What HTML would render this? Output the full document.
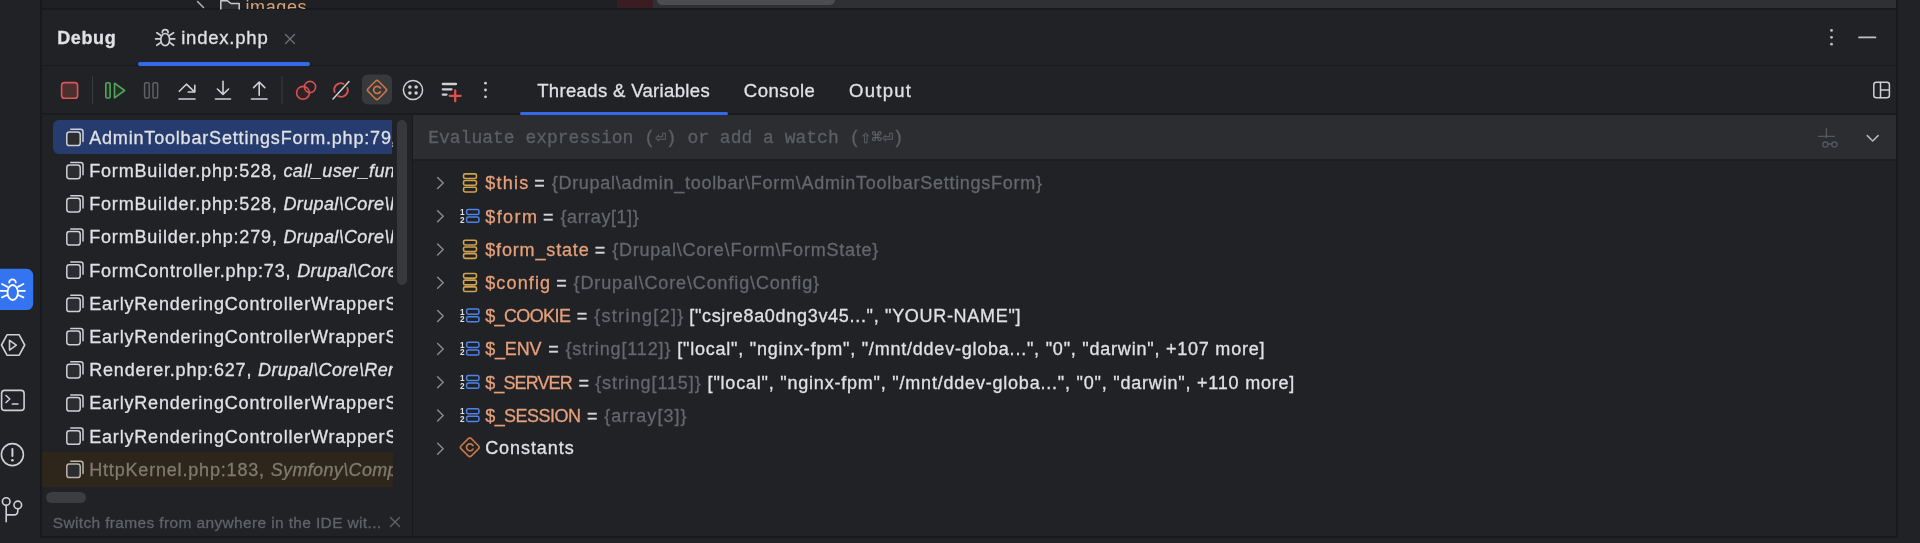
<!DOCTYPE html>
<html><head><meta charset="utf-8">
<style>
html,body{margin:0;padding:0;width:1920px;height:543px;overflow:hidden;background:#212225;}
body{position:relative;font-family:"Liberation Sans",sans-serif;}
.b{position:absolute;}
.t{position:absolute;white-space:pre;line-height:20px;-webkit-text-stroke:0.3px currentColor;}
.frames{position:absolute;left:42px;top:115px;width:351px;height:380px;overflow:hidden;}
.fr{position:absolute;left:47.2px;width:304px;white-space:pre;font-size:18px;line-height:20px;letter-spacing:0.82px;overflow:hidden;}
.fr{-webkit-text-stroke:0.3px currentColor;}
.fr i{font-style:italic;letter-spacing:0.35px;}
svg{position:absolute;left:0;top:0;}
</style></head>
<body>
<div id="wrap" style="position:absolute;left:0;top:0;width:1920px;height:543px;overflow:hidden;filter:blur(0.4px)">
<!-- top remnant -->
<div class="b" style="left:42px;top:0;width:575px;height:9px;background:#1f2023"></div>
<div class="b" style="left:617px;top:0;width:36px;height:9px;background:#391d23"></div>
<div class="b" style="left:653px;top:0;width:1243px;height:9px;background:#2e3034"></div>
<div class="b" style="left:657px;top:-6px;width:178px;height:10.5px;background:#4b4d51;border-radius:5px"></div>
<div class="b" style="left:42px;top:8px;width:1856px;height:2px;background:#18191b"></div>
<div class="b" style="left:245.5px;top:-3.5px;font-size:18px;line-height:20px;color:#d8a173;white-space:pre;letter-spacing:0.6px">images</div>
<div class="b" style="left:42px;top:9px;width:1856px;height:1px;background:#1a1b1e"></div>

<!-- panel -->
<div class="b" style="left:42px;top:10px;width:1854px;height:526px;background:#212225"></div>
<!-- left border -->
<div class="b" style="left:40px;top:0;width:2px;height:538px;background:#18191b"></div>
<!-- right border -->
<div class="b" style="left:1896px;top:0;width:2px;height:538px;background:#18191b"></div>
<!-- bottom border -->
<div class="b" style="left:40px;top:536px;width:1858px;height:2px;background:#18191b"></div>
<!-- header border -->
<div class="b" style="left:42px;top:65px;width:1854px;height:1.2px;background:#1a1b1d"></div>
<!-- blue underline header -->
<div class="b" style="left:137.5px;top:62.3px;width:172.5px;height:3.5px;background:#3469e9;border-radius:2px"></div>
<!-- toolbar border -->
<div class="b" style="left:42px;top:113px;width:1854px;height:2px;background:#1a1b1d"></div>
<div class="b" style="left:520px;top:112px;width:208px;height:3px;background:#3469e9;border-radius:1.5px"></div>
<!-- divider -->
<div class="b" style="left:411.7px;top:115px;width:1.8px;height:421px;background:#18191c"></div>
<!-- evaluate bar -->
<div class="b" style="left:413px;top:115px;width:1483px;height:44px;background:#2b2d30"></div>
<div class="b" style="left:413px;top:159px;width:1483px;height:2px;background:#1c1d20"></div>

<!-- selected frame -->
<div class="b" style="left:53px;top:120px;width:339.3px;height:33.5px;background:#263c6e;border-radius:6px 0 0 6px"></div>
<!-- library frame -->
<div class="b" style="left:42px;top:452px;width:351px;height:35px;background:#2e261b"></div>
<!-- scrollbars -->
<div class="b" style="left:397px;top:120px;width:10px;height:165px;background:#36383c;border-radius:5px"></div>
<div class="b" style="left:46px;top:491.5px;width:40px;height:11px;background:#3b3d41;border-radius:6px"></div>

<div class="frames">
<div class="fr" style="top:12.7px;color:#dfe1e5">AdminToolbarSettingsForm.php:79<i>, </i></div>
<div class="fr" style="top:45.9px;color:#dfe1e5">FormBuilder.php:528, <i>call_user_func_array:...</i></div>
<div class="fr" style="top:79.1px;color:#dfe1e5">FormBuilder.php:528, <i>Drupal\Core\Form\FormBuilder</i></div>
<div class="fr" style="top:112.3px;color:#dfe1e5">FormBuilder.php:279, <i>Drupal\Core\Form\FormBuilder</i></div>
<div class="fr" style="top:145.5px;color:#dfe1e5">FormController.php:73, <i>Drupal\Core\Controller</i></div>
<div class="fr" style="top:178.7px;color:#dfe1e5">EarlyRenderingControllerWrapperSubscriber.php<i></i></div>
<div class="fr" style="top:211.9px;color:#dfe1e5">EarlyRenderingControllerWrapperSubscriber.php<i></i></div>
<div class="fr" style="top:245.1px;color:#dfe1e5">Renderer.php:627, <i>Drupal\Core\Render\Renderer</i></div>
<div class="fr" style="top:278.3px;color:#dfe1e5">EarlyRenderingControllerWrapperSubscriber.php<i></i></div>
<div class="fr" style="top:311.5px;color:#dfe1e5">EarlyRenderingControllerWrapperSubscriber.php<i></i></div>
<div class="fr" style="top:344.7px;color:#807a70">HttpKernel.php:183, <i>Symfony\Component\HttpKernel</i></div>
</div>

<div class="t" style="left:57.2px;top:28.2px;font-size:18px;font-family:'Liberation Sans', sans-serif;color:#dfe1e5;letter-spacing:0.626px;font-weight:bold">Debug</div>
<div class="t" style="left:181.2px;top:28.0px;font-size:18.5px;font-family:'Liberation Sans', sans-serif;color:#dfe1e5;letter-spacing:0.783px;">index.php</div>
<div class="t" style="left:537.2px;top:80.6px;font-size:18.5px;font-family:'Liberation Sans', sans-serif;color:#dfe1e5;letter-spacing:0.348px;">Threads &amp; Variables</div>
<div class="t" style="left:743.8px;top:81.0px;font-size:18.5px;font-family:'Liberation Sans', sans-serif;color:#dfe1e5;letter-spacing:0.537px;">Console</div>
<div class="t" style="left:849.0px;top:81.0px;font-size:18.5px;font-family:'Liberation Sans', sans-serif;color:#dfe1e5;letter-spacing:1.273px;">Output</div>
<div class="t" style="left:428.2px;top:128.2px;font-size:18px;font-family:'Liberation Mono', monospace;color:#5c5f64;letter-spacing:0.000px;">Evaluate expression (⏎) or add a watch (⇧⌘⏎)</div>
<div class="t" style="left:485.2px;top:173.3px;font-size:18px;font-family:'Liberation Sans', sans-serif;color:#e5a07b;letter-spacing:1.245px;">$this</div>
<div class="t" style="left:534.2px;top:173.3px;font-size:18px;font-family:'Liberation Sans', sans-serif;color:#d2d4d8;letter-spacing:0.000px;">=</div>
<div class="t" style="left:551.7px;top:173.3px;font-size:18px;font-family:'Liberation Sans', sans-serif;color:#64676c;letter-spacing:0.727px;">{Drupal\admin_toolbar\Form\AdminToolbarSettingsForm}</div>
<div class="t" style="left:485.2px;top:206.5px;font-size:18px;font-family:'Liberation Sans', sans-serif;color:#e5a07b;letter-spacing:1.447px;">$form</div>
<div class="t" style="left:542.9px;top:206.5px;font-size:18px;font-family:'Liberation Sans', sans-serif;color:#d2d4d8;letter-spacing:0.000px;">=</div>
<div class="t" style="left:560.5px;top:206.5px;font-size:18px;font-family:'Liberation Sans', sans-serif;color:#64676c;letter-spacing:0.573px;">{array[1]}</div>
<div class="t" style="left:485.2px;top:239.7px;font-size:18px;font-family:'Liberation Sans', sans-serif;color:#e5a07b;letter-spacing:0.846px;">$form_state</div>
<div class="t" style="left:594.8px;top:239.7px;font-size:18px;font-family:'Liberation Sans', sans-serif;color:#d2d4d8;letter-spacing:0.000px;">=</div>
<div class="t" style="left:612.2px;top:239.7px;font-size:18px;font-family:'Liberation Sans', sans-serif;color:#64676c;letter-spacing:0.782px;">{Drupal\Core\Form\FormState}</div>
<div class="t" style="left:485.2px;top:272.9px;font-size:18px;font-family:'Liberation Sans', sans-serif;color:#e5a07b;letter-spacing:1.143px;">$config</div>
<div class="t" style="left:556.2px;top:272.9px;font-size:18px;font-family:'Liberation Sans', sans-serif;color:#d2d4d8;letter-spacing:0.000px;">=</div>
<div class="t" style="left:573.6px;top:272.9px;font-size:18px;font-family:'Liberation Sans', sans-serif;color:#64676c;letter-spacing:0.860px;">{Drupal\Core\Config\Config}</div>
<div class="t" style="left:485.2px;top:306.1px;font-size:18px;font-family:'Liberation Sans', sans-serif;color:#e5a07b;letter-spacing:-0.619px;">$_COOKIE</div>
<div class="t" style="left:576.8px;top:306.1px;font-size:18px;font-family:'Liberation Sans', sans-serif;color:#d2d4d8;letter-spacing:0.000px;">=</div>
<div class="t" style="left:594.2px;top:306.1px;font-size:18px;font-family:'Liberation Sans', sans-serif;color:#64676c;letter-spacing:1.305px;">{string[2]}</div>
<div class="t" style="left:689.2px;top:306.1px;font-size:18px;font-family:'Liberation Sans', sans-serif;color:#dfe1e5;letter-spacing:0.695px;">[&quot;csjre8a0dng3v45...&quot;, &quot;YOUR-NAME&quot;]</div>
<div class="t" style="left:485.2px;top:339.3px;font-size:18px;font-family:'Liberation Sans', sans-serif;color:#e5a07b;letter-spacing:-0.183px;">$_ENV</div>
<div class="t" style="left:548.2px;top:339.3px;font-size:18px;font-family:'Liberation Sans', sans-serif;color:#d2d4d8;letter-spacing:0.000px;">=</div>
<div class="t" style="left:565.4px;top:339.3px;font-size:18px;font-family:'Liberation Sans', sans-serif;color:#64676c;letter-spacing:0.855px;">{string[112]}</div>
<div class="t" style="left:677.2px;top:339.3px;font-size:18px;font-family:'Liberation Sans', sans-serif;color:#dfe1e5;letter-spacing:0.778px;">[&quot;local&quot;, &quot;nginx-fpm&quot;, &quot;/mnt/ddev-globa...&quot;, &quot;0&quot;, &quot;darwin&quot;, +107 more]</div>
<div class="t" style="left:485.2px;top:372.5px;font-size:18px;font-family:'Liberation Sans', sans-serif;color:#e5a07b;letter-spacing:-0.888px;">$_SERVER</div>
<div class="t" style="left:578.6px;top:372.5px;font-size:18px;font-family:'Liberation Sans', sans-serif;color:#d2d4d8;letter-spacing:0.000px;">=</div>
<div class="t" style="left:595.2px;top:372.5px;font-size:18px;font-family:'Liberation Sans', sans-serif;color:#64676c;letter-spacing:0.897px;">{string[115]}</div>
<div class="t" style="left:707.6px;top:372.5px;font-size:18px;font-family:'Liberation Sans', sans-serif;color:#dfe1e5;letter-spacing:0.789px;">[&quot;local&quot;, &quot;nginx-fpm&quot;, &quot;/mnt/ddev-globa...&quot;, &quot;0&quot;, &quot;darwin&quot;, +110 more]</div>
<div class="t" style="left:485.2px;top:405.7px;font-size:18px;font-family:'Liberation Sans', sans-serif;color:#e5a07b;letter-spacing:-0.543px;">$_SESSION</div>
<div class="t" style="left:587.0px;top:405.7px;font-size:18px;font-family:'Liberation Sans', sans-serif;color:#d2d4d8;letter-spacing:0.000px;">=</div>
<div class="t" style="left:604.2px;top:405.7px;font-size:18px;font-family:'Liberation Sans', sans-serif;color:#64676c;letter-spacing:1.028px;">{array[3]}</div>
<div class="t" style="left:485.2px;top:438.1px;font-size:18px;font-family:'Liberation Sans', sans-serif;color:#dfe1e5;letter-spacing:0.932px;">Constants</div>
<div class="t" style="left:52.7px;top:513.0px;font-size:15.5px;font-family:'Liberation Sans', sans-serif;color:#606368;letter-spacing:0.359px;">Switch frames from anywhere in the IDE wit...</div>

<svg width="1920" height="543" viewBox="0 0 1920 543" fill="none" stroke-linecap="round" stroke-linejoin="round">
 <!-- top remnant icons -->
 <path d="M197.5 1.5 L203.5 7.5" stroke="#aeb1b6" stroke-width="1.5"/>
 <path d="M220.8 9 V0.8 H227.5 L231 3.5 H239.2 V9" stroke="#c9cbd0" stroke-width="1.5" fill="#2b2d30"/>

 <!-- header: bug icon -->
 <g stroke="#ced0d6" stroke-width="1.7">
  <path d="M162.3 32.6 A2.9 2.9 0 0 1 168.1 32.6"/>
  <ellipse cx="165.2" cy="39.6" rx="4.4" ry="6.1" fill="#212225"/>
  <path d="M156.8 32.8 L160.6 35.3 M155.6 38.8 H160.4 M156.8 45.3 L160.6 42.6 M173.6 32.8 L169.8 35.3 M174.8 38.8 H170 M173.6 45.3 L169.8 42.6"/>
 </g>
 <path d="M285.5 34.5 L294.5 43.5 M294.5 34.5 L285.5 43.5" stroke="#6f737a" stroke-width="1.3"/>

 <!-- top right -->
 <g fill="#bfc1c5"><circle cx="1831.5" cy="30.4" r="1.4"/><circle cx="1831.5" cy="37.3" r="1.4"/><circle cx="1831.5" cy="44.2" r="1.4"/></g>
 <path d="M1859 37.4 H1875.5" stroke="#bfc1c5" stroke-width="1.7"/>

 <!-- toolbar -->
 <rect x="61.6" y="82.6" width="16" height="15.6" rx="2.8" fill="#4e2f30" stroke="#dc5656" stroke-width="1.6"/>
 <path d="M92.5 76.5 V103.5" stroke="#393b40" stroke-width="1"/>
 <rect x="105.8" y="82.8" width="4.3" height="15.2" rx="1.3" stroke="#53a55c" stroke-width="1.6" fill="#233026"/>
 <path d="M114.5 83.2 L124.6 90.5 L114.5 97.8 Z" stroke="#53a55c" stroke-width="1.6" fill="#233026"/>
 <rect x="144.6" y="82.8" width="4.6" height="15.2" rx="1.3" stroke="#5e6166" stroke-width="1.5"/>
 <rect x="153" y="82.8" width="4.6" height="15.2" rx="1.3" stroke="#5e6166" stroke-width="1.5"/>
 <g stroke="#ced0d6" stroke-width="1.6">
  <path d="M179.3 91.2 L186.4 84.2 L194.3 91.6"/>
  <path d="M194.8 85.2 V92 H188.2"/>
  <path d="M179 99 H195"/>
  <path d="M223 81.2 V94 M217.4 89 L223 94.4 L228.6 89"/>
  <path d="M215.5 99 H230.5"/>
  <path d="M259.2 82.5 V95.2 M253.6 87.6 L259.2 82 L264.8 87.6"/>
  <path d="M251.5 99 H267"/>
 </g>
 <path d="M282 76.5 V103.5" stroke="#393b40" stroke-width="1"/>
 <circle cx="303" cy="92.8" r="6.4" stroke="#d95050" stroke-width="1.6" fill="#2e2224"/>
 <circle cx="310" cy="87" r="5.6" stroke="#d95050" stroke-width="1.6"/>
 <path d="M334.6 92 A6.6 6.6 0 0 1 343.5 83.8 M347.4 88 A6.6 6.6 0 0 1 338.5 96.2" stroke="#d95050" stroke-width="1.9"/>
 <path d="M333 99 L349 81.5" stroke="#ced0d6" stroke-width="1.5"/>
 <rect x="362" y="74.5" width="30" height="30" rx="6" fill="#38393d"/>
 <rect x="-7.3" y="-7.3" width="14.6" height="14.6" rx="2.2" transform="translate(377 90) rotate(45)" stroke="#cd7748" stroke-width="1.6" fill="#30262200"/>
 <path d="M380.3 88 A3.6 3.6 0 1 0 380.3 91.8" stroke="#cd7748" stroke-width="1.7"/>
 <circle cx="413" cy="90" r="9.6" stroke="#ced0d6" stroke-width="1.5"/>
 <g fill="#ced0d6"><circle cx="409.9" cy="86.9" r="1.75"/><circle cx="416.1" cy="86.9" r="1.75"/><circle cx="409.9" cy="93.1" r="1.75"/><circle cx="416.1" cy="93.1" r="1.75"/></g>
 <path d="M442.8 84 H456 M442.8 89.3 H451.5 M442.8 94.6 H446.5" stroke="#ced0d6" stroke-width="2.3"/>
 <path d="M455.2 90.3 V101.3 M449.7 95.8 H460.7" stroke="#e04f4f" stroke-width="2.3"/>
 <g fill="#ced0d6"><circle cx="485.5" cy="83.2" r="1.4"/><circle cx="485.5" cy="90" r="1.4"/><circle cx="485.5" cy="96.8" r="1.4"/></g>

 <!-- layout icon -->
 <rect x="1873.8" y="82.2" width="15.6" height="15.6" rx="2.5" stroke="#ced0d6" stroke-width="1.5"/>
 <path d="M1880.5 82.5 V97.5 M1880.5 90 H1889" stroke="#ced0d6" stroke-width="1.5"/>

 <!-- evaluate icons -->
 <path d="M1826.4 128.5 V137.5 M1818.5 136.3 H1834.5" stroke="#55585d" stroke-width="1.3"/>
 <circle cx="1825.4" cy="144.6" r="2.6" stroke="#55585d" stroke-width="1.3"/>
 <circle cx="1834.4" cy="144.6" r="2.6" stroke="#55585d" stroke-width="1.3"/>
 <path d="M1828 144 H1831.8" stroke="#55585d" stroke-width="1.3"/>
 <path d="M1867.3 135.6 L1872.7 141 L1878.1 135.6" stroke="#b8bbc0" stroke-width="1.5"/>

 <path d="M70.8 129.3 H80.6 A2.4 2.4 0 0 1 83 131.7 V141.5" stroke="#ced0d6" stroke-width="1.5"/>
<rect x="66.8" y="131.9" width="13.4" height="13.6" rx="2.6" stroke="#ced0d6" stroke-width="1.5" fill="#2b2d30"/>
<path d="M70.8 162.5 H80.6 A2.4 2.4 0 0 1 83 164.9 V174.7" stroke="#ced0d6" stroke-width="1.5"/>
<rect x="66.8" y="165.1" width="13.4" height="13.6" rx="2.6" stroke="#ced0d6" stroke-width="1.5" fill="#2b2d30"/>
<path d="M70.8 195.7 H80.6 A2.4 2.4 0 0 1 83 198.1 V207.9" stroke="#ced0d6" stroke-width="1.5"/>
<rect x="66.8" y="198.3" width="13.4" height="13.6" rx="2.6" stroke="#ced0d6" stroke-width="1.5" fill="#2b2d30"/>
<path d="M70.8 228.9 H80.6 A2.4 2.4 0 0 1 83 231.3 V241.1" stroke="#ced0d6" stroke-width="1.5"/>
<rect x="66.8" y="231.5" width="13.4" height="13.6" rx="2.6" stroke="#ced0d6" stroke-width="1.5" fill="#2b2d30"/>
<path d="M70.8 262.1 H80.6 A2.4 2.4 0 0 1 83 264.5 V274.3" stroke="#ced0d6" stroke-width="1.5"/>
<rect x="66.8" y="264.7" width="13.4" height="13.6" rx="2.6" stroke="#ced0d6" stroke-width="1.5" fill="#2b2d30"/>
<path d="M70.8 295.3 H80.6 A2.4 2.4 0 0 1 83 297.7 V307.5" stroke="#ced0d6" stroke-width="1.5"/>
<rect x="66.8" y="297.9" width="13.4" height="13.6" rx="2.6" stroke="#ced0d6" stroke-width="1.5" fill="#2b2d30"/>
<path d="M70.8 328.5 H80.6 A2.4 2.4 0 0 1 83 330.9 V340.7" stroke="#ced0d6" stroke-width="1.5"/>
<rect x="66.8" y="331.1" width="13.4" height="13.6" rx="2.6" stroke="#ced0d6" stroke-width="1.5" fill="#2b2d30"/>
<path d="M70.8 361.7 H80.6 A2.4 2.4 0 0 1 83 364.1 V373.9" stroke="#ced0d6" stroke-width="1.5"/>
<rect x="66.8" y="364.3" width="13.4" height="13.6" rx="2.6" stroke="#ced0d6" stroke-width="1.5" fill="#2b2d30"/>
<path d="M70.8 394.9 H80.6 A2.4 2.4 0 0 1 83 397.3 V407.1" stroke="#ced0d6" stroke-width="1.5"/>
<rect x="66.8" y="397.5" width="13.4" height="13.6" rx="2.6" stroke="#ced0d6" stroke-width="1.5" fill="#2b2d30"/>
<path d="M70.8 428.1 H80.6 A2.4 2.4 0 0 1 83 430.5 V440.3" stroke="#ced0d6" stroke-width="1.5"/>
<rect x="66.8" y="430.7" width="13.4" height="13.6" rx="2.6" stroke="#ced0d6" stroke-width="1.5" fill="#2b2d30"/>
<path d="M70.8 461.3 H80.6 A2.4 2.4 0 0 1 83 463.7 V473.5" stroke="#b9b5ad" stroke-width="1.5"/>
<rect x="66.8" y="463.9" width="13.4" height="13.6" rx="2.6" stroke="#b9b5ad" stroke-width="1.5" fill="#2b2d30"/>
 <path d="M437.6 177.6 L443.2 183.1 L437.6 188.6" stroke="#8a8d92" stroke-width="1.4"/>
<rect x="463.55" y="173.85" width="12.9" height="4.7" rx="1.6" stroke="#cfa350" stroke-width="1.6"/>
<rect x="463.55" y="180.55" width="12.9" height="4.7" rx="1.6" stroke="#cfa350" stroke-width="1.6"/>
<rect x="463.55" y="187.25" width="12.9" height="4.7" rx="1.6" stroke="#cfa350" stroke-width="1.6"/>
<path d="M437.6 210.8 L443.2 216.3 L437.6 221.8" stroke="#8a8d92" stroke-width="1.4"/>
<rect x="466.65" y="209.45" width="12.3" height="5.15" rx="1.6" stroke="#4f83ec" stroke-width="1.5"/>
<rect x="466.65" y="217.10" width="12.3" height="5.15" rx="1.6" stroke="#4f83ec" stroke-width="1.5"/>
<text x="460" y="215.2" font-family="Liberation Sans" font-weight="bold" font-size="8.2" fill="#dfe1e5" stroke="none">1</text>
<text x="460" y="222.6" font-family="Liberation Sans" font-weight="bold" font-size="8.2" fill="#dfe1e5" stroke="none">2</text>
<path d="M437.6 244.0 L443.2 249.5 L437.6 255.0" stroke="#8a8d92" stroke-width="1.4"/>
<rect x="463.55" y="240.25" width="12.9" height="4.7" rx="1.6" stroke="#cfa350" stroke-width="1.6"/>
<rect x="463.55" y="246.95" width="12.9" height="4.7" rx="1.6" stroke="#cfa350" stroke-width="1.6"/>
<rect x="463.55" y="253.65" width="12.9" height="4.7" rx="1.6" stroke="#cfa350" stroke-width="1.6"/>
<path d="M437.6 277.2 L443.2 282.7 L437.6 288.2" stroke="#8a8d92" stroke-width="1.4"/>
<rect x="463.55" y="273.45" width="12.9" height="4.7" rx="1.6" stroke="#cfa350" stroke-width="1.6"/>
<rect x="463.55" y="280.15" width="12.9" height="4.7" rx="1.6" stroke="#cfa350" stroke-width="1.6"/>
<rect x="463.55" y="286.85" width="12.9" height="4.7" rx="1.6" stroke="#cfa350" stroke-width="1.6"/>
<path d="M437.6 310.4 L443.2 315.9 L437.6 321.4" stroke="#8a8d92" stroke-width="1.4"/>
<rect x="466.65" y="309.05" width="12.3" height="5.15" rx="1.6" stroke="#4f83ec" stroke-width="1.5"/>
<rect x="466.65" y="316.70" width="12.3" height="5.15" rx="1.6" stroke="#4f83ec" stroke-width="1.5"/>
<text x="460" y="314.8" font-family="Liberation Sans" font-weight="bold" font-size="8.2" fill="#dfe1e5" stroke="none">1</text>
<text x="460" y="322.2" font-family="Liberation Sans" font-weight="bold" font-size="8.2" fill="#dfe1e5" stroke="none">2</text>
<path d="M437.6 343.6 L443.2 349.1 L437.6 354.6" stroke="#8a8d92" stroke-width="1.4"/>
<rect x="466.65" y="342.25" width="12.3" height="5.15" rx="1.6" stroke="#4f83ec" stroke-width="1.5"/>
<rect x="466.65" y="349.90" width="12.3" height="5.15" rx="1.6" stroke="#4f83ec" stroke-width="1.5"/>
<text x="460" y="348.0" font-family="Liberation Sans" font-weight="bold" font-size="8.2" fill="#dfe1e5" stroke="none">1</text>
<text x="460" y="355.4" font-family="Liberation Sans" font-weight="bold" font-size="8.2" fill="#dfe1e5" stroke="none">2</text>
<path d="M437.6 376.8 L443.2 382.3 L437.6 387.8" stroke="#8a8d92" stroke-width="1.4"/>
<rect x="466.65" y="375.45" width="12.3" height="5.15" rx="1.6" stroke="#4f83ec" stroke-width="1.5"/>
<rect x="466.65" y="383.10" width="12.3" height="5.15" rx="1.6" stroke="#4f83ec" stroke-width="1.5"/>
<text x="460" y="381.2" font-family="Liberation Sans" font-weight="bold" font-size="8.2" fill="#dfe1e5" stroke="none">1</text>
<text x="460" y="388.6" font-family="Liberation Sans" font-weight="bold" font-size="8.2" fill="#dfe1e5" stroke="none">2</text>
<path d="M437.6 410.0 L443.2 415.5 L437.6 421.0" stroke="#8a8d92" stroke-width="1.4"/>
<rect x="466.65" y="408.65" width="12.3" height="5.15" rx="1.6" stroke="#4f83ec" stroke-width="1.5"/>
<rect x="466.65" y="416.30" width="12.3" height="5.15" rx="1.6" stroke="#4f83ec" stroke-width="1.5"/>
<text x="460" y="414.4" font-family="Liberation Sans" font-weight="bold" font-size="8.2" fill="#dfe1e5" stroke="none">1</text>
<text x="460" y="421.8" font-family="Liberation Sans" font-weight="bold" font-size="8.2" fill="#dfe1e5" stroke="none">2</text>
<path d="M437.6 443.2 L443.2 448.7 L437.6 454.2" stroke="#8a8d92" stroke-width="1.4"/>
<rect x="-7.2" y="-7.2" width="14.4" height="14.4" rx="2.2" transform="translate(469.8 447.3) rotate(45)" stroke="#c4784a" stroke-width="1.6"/>
<path d="M473 445.5 A3.5 3.5 0 1 0 473 449.1" stroke="#c4784a" stroke-width="1.7"/>

 <!-- sidebar -->
 <rect x="-10" y="268.8" width="43.2" height="41.3" rx="6.5" fill="#3574f0"/>
 <g stroke="#ffffff" stroke-width="1.8">
  <path d="M9.2 282.6 A3.3 3.3 0 0 1 15.8 282.6"/>
  <ellipse cx="12.7" cy="292.5" rx="5.2" ry="7.5"/>
  <path d="M2 284 L7.4 286.9 M0.5 290.8 H7 M2 297.4 L7.4 295 M23.4 284 L18 286.9 M24.9 290.8 H18.4 M23.4 297.4 L18 295"/>
 </g>
 <path d="M1.5 345 L7 334.8 H19.2 L24.7 345 L19.2 355.2 H7 Z" stroke="#ced0d6" stroke-width="1.6"/>
 <path d="M9.5 340.3 L16.3 345.2 L9.5 350.1 Z" stroke="#ced0d6" stroke-width="1.6"/>
 <rect x="1.6" y="390.4" width="22.5" height="20" rx="3" stroke="#ced0d6" stroke-width="1.6"/>
 <path d="M6 395.5 L9.8 399 L6 402.5 M12.3 404 H18" stroke="#ced0d6" stroke-width="1.6"/>
 <circle cx="12.4" cy="454.6" r="11" stroke="#ced0d6" stroke-width="1.6"/>
 <path d="M12.4 449 V456" stroke="#ced0d6" stroke-width="2"/>
 <circle cx="12.4" cy="460.2" r="1.3" fill="#ced0d6"/>
 <circle cx="6.2" cy="501.6" r="3.8" stroke="#ced0d6" stroke-width="1.6"/>
 <circle cx="17.8" cy="504.9" r="3.8" stroke="#ced0d6" stroke-width="1.6"/>
 <path d="M6.2 505.4 V521.8 M17.8 508.7 V511 Q17.8 514.9 13.9 514.9 H6.2" stroke="#ced0d6" stroke-width="1.6"/>
 <path d="M390.5 517.5 L399.5 526.5 M399.5 517.5 L390.5 526.5" stroke="#606368" stroke-width="1.4"/>
</svg>
</div>
</body></html>
